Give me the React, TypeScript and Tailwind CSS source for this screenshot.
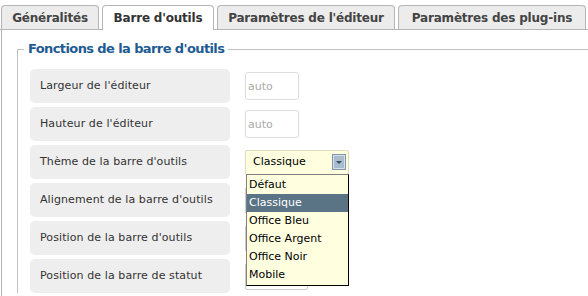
const tabs = [
  { label: "Généralités", w: "w-[98px]", active: false },
  { label: "Barre d'outils", w: "w-[112px]", active: true },
  { label: "Paramètres de l'éditeur", w: "w-[178px]", active: false },
  { label: "Paramètres des plug-ins", w: "w-[188px]", active: false },
];

const rows = [
  { label: "Largeur de l'éditeur", kind: "input" },
  { label: "Hauteur de l'éditeur", kind: "input" },
  { label: "Thème de la barre d'outils", kind: "select" },
  { label: "Alignement de la barre d'outils", kind: "box" },
  { label: "Position de la barre d'outils", kind: "box" },
  { label: "Position de la barre de statut", kind: "box" },
];

const options = ["Défaut", "Classique", "Office Bleu", "Office Argent", "Office Noir", "Mobile"];

const App = () => {
  return (
    <div className="w-[588px] h-[296px] overflow-hidden bg-white font-['DejaVu_Sans',sans-serif]">
      <div className="flex items-end gap-[3px] pt-[5px] pl-[1px] border-b border-[#b5b5b5] h-[30px]">
        {tabs.map((t) => (
          <div
            key={t.label}
            className={
              t.active
                ? `${t.w} h-[25px] -mb-px bg-white border border-b-0 border-[#b5b5b5] rounded-t-[4px] flex items-center justify-center text-[12px] font-bold text-[#333] tracking-[-0.2px]`
                : `${t.w} h-[24px] bg-[#ececec] border border-b-0 border-[#b5b5b5] rounded-t-[4px] flex items-center justify-center text-[12px] font-bold text-[#444] tracking-[-0.2px]`
            }
          >
            {t.label}
          </div>
        ))}
      </div>
      <div className="border-l border-[#b5b5b5] ml-[1px] pl-[15px] pt-[11px] h-[266px]">
        <fieldset className="border-l border-t border-[#c0c0c0] pl-[12px] pt-[12px] min-w-0">
          <legend className="-ml-[6px] px-[4px] text-[13px] leading-[16px] font-bold text-[#1e5b91] tracking-[-0.6px]">
            Fonctions de la barre d'outils
          </legend>
          <div className="flex flex-col gap-[4px]">
            {rows.map((r) => (
              <div key={r.label} className="flex items-center h-[34px]">
                <div className="w-[200px] h-[34px] bg-[#eeeeee] rounded-[5px] pl-[10px] flex items-center text-[11px] text-[#333] tracking-[0.1px]">
                  {r.label}
                </div>
                <div className="ml-[15px] relative">
                  {r.kind === "input" && (
                    <input
                      placeholder="auto"
                      className="w-[54px] h-[28px] border border-[#dddddd] rounded-[3px] px-[2px] text-[11px] placeholder:text-[#aaaaaa] outline-none"
                    />
                  )}
                  {r.kind === "box" && (
                    <div className="w-[63px] h-[27px] border border-[#cccccc] rounded-[2px] bg-white" />
                  )}
                  {r.kind === "select" && (
                    <>
                      <div className="w-[104px] h-[25px] bg-[#ffffe0] border border-[#dcdcc0] rounded-[2px] flex items-center justify-between pl-[7px] pr-[2px] text-[11px] text-black">
                        <span>Classique</span>
                        <svg width="14" height="16" viewBox="0 0 14 16">
                          <rect x="0.5" y="0.5" width="13" height="15" fill="#a9bccd" stroke="#7f95a8" />
                          <rect x="1.5" y="1.5" width="11" height="13" fill="none" stroke="#d6e0ea" />
                          <path d="M4 7 L10 7 L7 10 Z" fill="#3d4f60" />
                        </svg>
                      </div>
                      <div className="absolute left-[1px] top-[24px] w-[103px] bg-[#ffffe0] border border-black border-l-[#808080] border-t-[#808080] z-10 py-[1px]">
                        {options.map((o) => (
                          <div
                            key={o}
                            className={
                              o === "Classique"
                                ? "h-[18px] leading-[18px] pl-[2px] text-[11px] bg-[#5a7385] text-white"
                                : "h-[18px] leading-[18px] pl-[2px] text-[11px] text-black"
                            }
                          >
                            {o}
                          </div>
                        ))}
                      </div>
                    </>
                  )}
                </div>
              </div>
            ))}
          </div>
        </fieldset>
      </div>
    </div>
  );
};

export default App;
